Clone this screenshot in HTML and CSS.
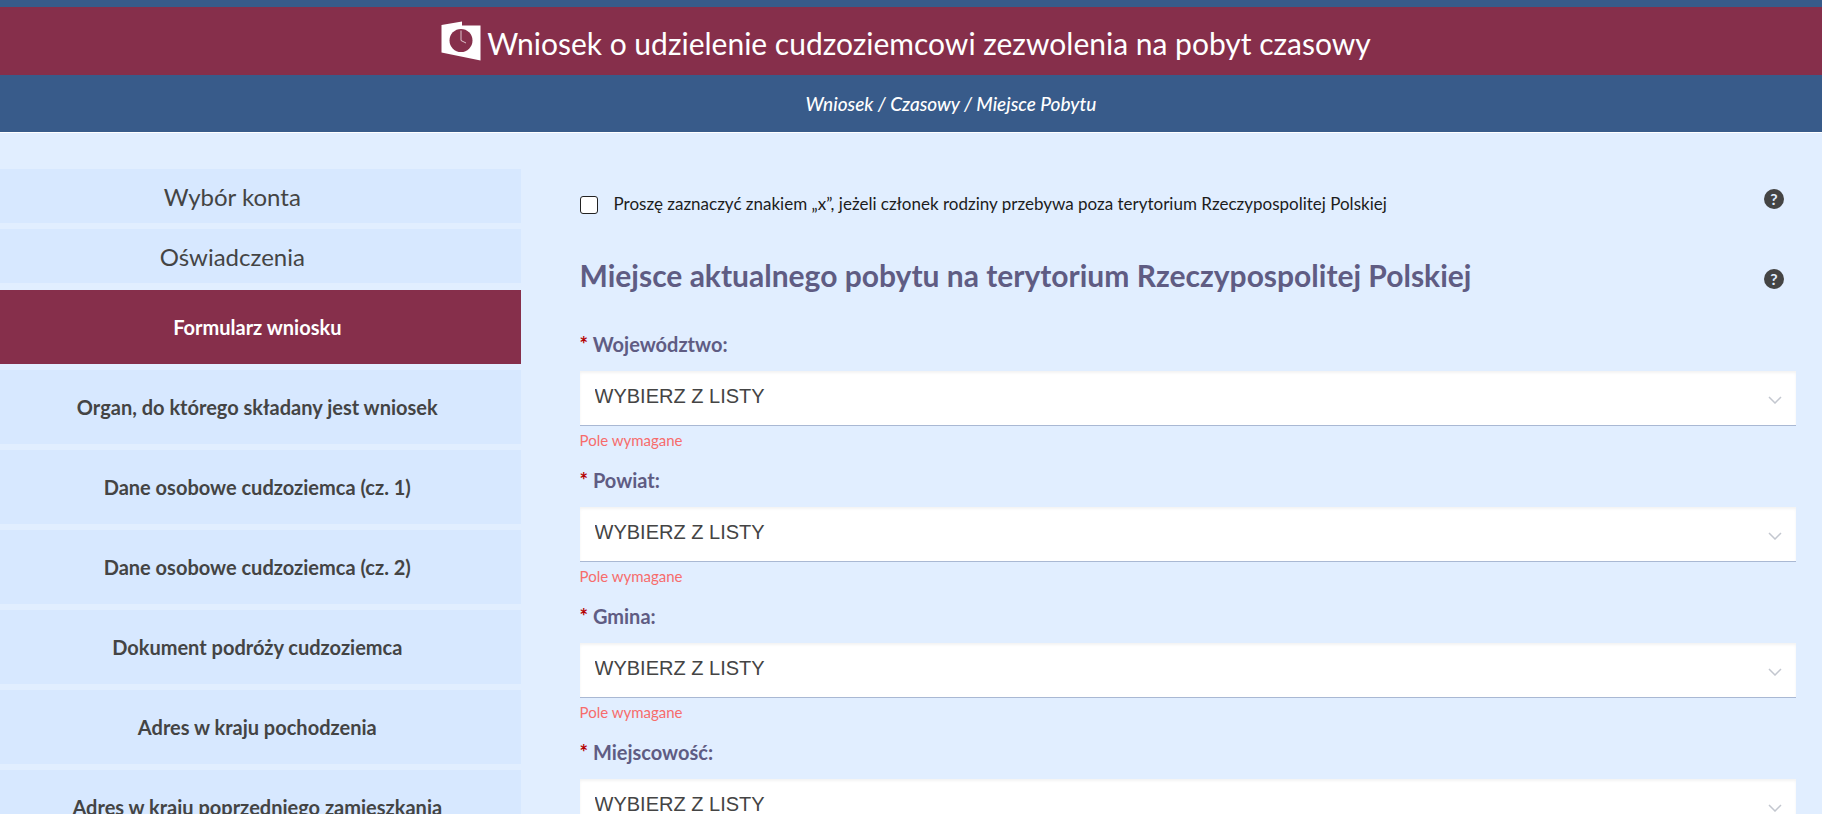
FILE: index.html
```html
<!DOCTYPE html>
<html lang="pl">
<head>
  <meta charset="UTF-8">
  <meta name="viewport" content="width=device-width, initial-scale=1">
  <title>Wniosek o udzielenie cudzoziemcowi zezwolenia na pobyt czasowy</title>
  <link rel="stylesheet" href="styles.css">
</head>
<body>

  <header class="header">
    <div class="title-bar">
      <svg class="logo" viewBox="0 0 40 40" aria-hidden="true">
        <path fill="#fff" d="M0.5 4 21 0.5V4.5H39.5V39.5L0.5 31.5Z"/>
        <circle cx="20" cy="19.5" r="11.5" fill="#862f4b"/>
        <path fill="none" stroke="#fff" stroke-opacity="0.7" d="M20 9.5V19.5L25 22"/>
      </svg>
      <h1 class="title">Wniosek o udzielenie cudzoziemcowi zezwolenia na pobyt czasowy</h1>
    </div>
    <div class="breadcrumb">Wniosek / Czasowy / Miejsce Pobytu</div>
  </header>

  <div class="layout">
    <nav class="sidebar">
      <a class="step" href="#">Wybór konta</a>
      <a class="step" href="#">Oświadczenia</a>
      <div class="substeps">
        <a class="substep active" href="#">Formularz wniosku</a>
        <a class="substep" href="#">Organ, do którego składany jest wniosek</a>
        <a class="substep" href="#">Dane osobowe cudzoziemca (cz. 1)</a>
        <a class="substep" href="#">Dane osobowe cudzoziemca (cz. 2)</a>
        <a class="substep" href="#">Dokument podróży cudzoziemca</a>
        <a class="substep" href="#">Adres w kraju pochodzenia</a>
        <a class="substep" href="#">Adres w kraju poprzedniego zamieszkania</a>
      </div>
    </nav>

    <main class="content">
      <form>
        <div class="row">
          <div class="check">
            <input type="checkbox" id="abroad">
            <label for="abroad">Proszę zaznaczyć znakiem „x”, jeżeli członek rodziny przebywa poza terytorium Rzeczypospolitej Polskiej</label>
          </div>
          <button type="button" class="help">?</button>
        </div>

        <div class="row heading-row">
          <h2 class="section-title">Miejsce aktualnego pobytu na terytorium Rzeczypospolitej Polskiej</h2>
          <button type="button" class="help">?</button>
        </div>

        <div class="field">
          <label for="voivodeship"><span class="required">*</span> Województwo:</label>
          <div class="select">
            <select id="voivodeship"><option>WYBIERZ Z LISTY</option></select>
            <svg class="chevron" viewBox="0 0 14 8" aria-hidden="true"><path d="M1 1 7 7 13 1"/></svg>
          </div>
          <p class="error">Pole wymagane</p>
        </div>

        <div class="field">
          <label for="county"><span class="required">*</span> Powiat:</label>
          <div class="select">
            <select id="county"><option>WYBIERZ Z LISTY</option></select>
            <svg class="chevron" viewBox="0 0 14 8" aria-hidden="true"><path d="M1 1 7 7 13 1"/></svg>
          </div>
          <p class="error">Pole wymagane</p>
        </div>

        <div class="field">
          <label for="commune"><span class="required">*</span> Gmina:</label>
          <div class="select">
            <select id="commune"><option>WYBIERZ Z LISTY</option></select>
            <svg class="chevron" viewBox="0 0 14 8" aria-hidden="true"><path d="M1 1 7 7 13 1"/></svg>
          </div>
          <p class="error">Pole wymagane</p>
        </div>

        <div class="field">
          <label for="city"><span class="required">*</span> Miejscowość:</label>
          <div class="select">
            <select id="city"><option>WYBIERZ Z LISTY</option></select>
            <svg class="chevron" viewBox="0 0 14 8" aria-hidden="true"><path d="M1 1 7 7 13 1"/></svg>
          </div>
          <p class="error">Pole wymagane</p>
        </div>
      </form>
    </main>
  </div>

</body>
</html>
```
FILE: styles.css
```css
* {
  box-sizing: border-box;
}
html {
  scrollbar-width: none;
}
body {
  margin: 0;
  font-family: Lato, sans-serif;
  background: #e1eeff;
  color: #444;
}

/* header */
.header {
  background: #385b8a;
  border-bottom: 1px solid #fff;
  padding-top: 7px;
  color: #fff;
}
.title-bar {
  display: flex;
  justify-content: center;
  align-items: center;
  gap: 6px;
  height: 68px;
  padding-right: 10px;
  background: #862f4b;
}
.logo {
  width: 40px;
  height: 40px;
}
.title {
  margin: 0;
  padding-top: 4px;
  font-size: 30px;
  font-weight: 400;
  line-height: 40px;
}
.breadcrumb {
  height: 57px;
  padding-left: 80px;
  font-size: 19px;
  font-style: italic;
  font-weight: 500;
  line-height: 58px;
  text-align: center;
}

/* two columns */
.layout {
  display: grid;
  grid-template-columns: minmax(0, 2fr) minmax(0, 5fr);
  padding-top: 36px;
}

/* left menu */
.sidebar {
  display: flex;
  flex-direction: column;
  gap: 6px;
}
.step, .substep {
  display: block;
  background: #d7e8ff;
  color: #444;
  text-align: center;
  text-decoration: none;
}
.step {
  padding: 2px 56px 0 0;
  font-size: 24px;
  line-height: 52px;
}
.substeps {
  display: flex;
  flex-direction: column;
  gap: 6px;
  padding-top: 1px;
}
.substep {
  padding-right: 6px;
  font-size: 20px;
  font-weight: 700;
  line-height: 74px;
}
.substep.active {
  background: #862f4b;
  color: #fff;
}

/* form */
.content {
  padding: 20px 26px 0 59px;
}
.row {
  display: flex;
  justify-content: space-between;
  align-items: flex-start;
  height: 80px;
  padding-right: 12px;
}
.heading-row {
  height: 63px;
}
.check {
  display: flex;
  align-items: center;
  gap: 16px;
  padding-top: 4px;
  color: #1c1c1c;
  font-size: 17px;
  line-height: 22px;
}
.check input {
  appearance: none;
  width: 18px;
  height: 18px;
  margin: 2px 0 0;
  background: #fff;
  border: 1px solid #222;
  border-radius: 3px;
}
.section-title {
  margin: 0;
  color: #5f5c83;
  font-size: 30px;
  font-weight: 700;
  line-height: 12px;
}
.help {
  flex: none;
  width: 20px;
  height: 20px;
  padding: 0;
  border: none;
  border-radius: 50%;
  background: #444;
  color: #e1eeff;
  font: 700 16px/20px Lato, sans-serif;
}
.field label {
  display: block;
  margin-bottom: 15px;
  color: #5f5c83;
  font-size: 20px;
  font-weight: 700;
  line-height: 24px;
}
.required {
  color: #b50000;
}
.select {
  position: relative;
}
.select select {
  appearance: none;
  display: block;
  width: 100%;
  height: 55px;
  padding: 0 40px 4px 15px;
  border: none;
  border-bottom: 1px solid #a9b8d3;
  border-radius: 0;
  background: #fff;
  box-shadow: inset 0 2px 3px #f3f3f3;
  color: #444;
  font: 20px "Liberation Sans", Arial, sans-serif;
}
.chevron {
  position: absolute;
  right: 14px;
  top: 25px;
  width: 14px;
  height: 8px;
  fill: none;
  stroke: #c3c7cf;
  stroke-width: 1.5;
  pointer-events: none;
}
.error {
  margin: 4px 0 18px;
  color: #f76c6c;
  font-size: 15px;
  line-height: 20px;
}
```
